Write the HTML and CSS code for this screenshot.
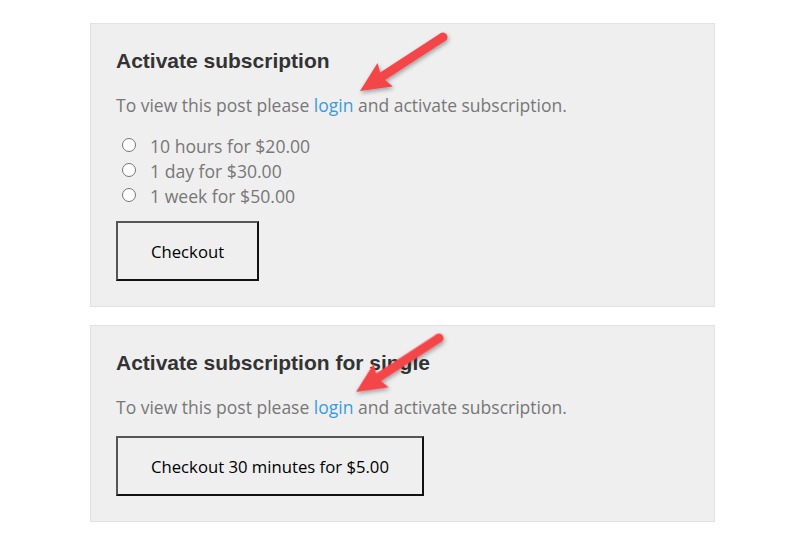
FILE: index.html
```html
<!DOCTYPE html>
<html>
<head>
<meta charset="utf-8">
<link rel="stylesheet" href="styles.css">
</head>
<body>
<div class="page">
  <section class="box">
    <h2 class="title">Activate subscription</h2>
    <p class="note">To view this post please <a class="link" href="#">login</a> and activate subscription.</p>
    <ul class="options">
      <li class="option"><span class="radio"></span><span>10 hours for $20.00</span></li>
      <li class="option"><span class="radio"></span><span>1 day for $30.00</span></li>
      <li class="option"><span class="radio"></span><span>1 week for $50.00</span></li>
    </ul>
    <button class="btn">Checkout</button>
  </section>
  <section class="box">
    <h2 class="title">Activate subscription for single</h2>
    <p class="note">To view this post please <a class="link" href="#">login</a> and activate subscription.</p>
    <button class="btn">Checkout 30 minutes for $5.00</button>
  </section>
</div>
<svg class="arrows" width="800" height="540" viewBox="0 0 800 540">
  <defs>
    <filter id="sh" x="-30%" y="-30%" width="160%" height="160%">
      <feDropShadow dx="1" dy="2" stdDeviation="2" flood-color="#000" flood-opacity="0.35"/>
    </filter>
    <g id="arrow">
      <polygon points="0,0 30,-14 27,-4.5 99,-4.5 99,4.5 27,4.5 30,14" fill="#f4444a"/>
      <circle cx="99" cy="0" r="4.5" fill="#f4444a"/>
    </g>
  </defs>
  <g filter="url(#sh)">
    <use href="#arrow" transform="translate(360,91) rotate(-33)"/>
    <use href="#arrow" transform="translate(356,392) rotate(-33)"/>
  </g>
</svg>
</body>
</html>
```
FILE: styles.css
```css
html, body {
  margin: 0;
  padding: 0;
  background: #ffffff;
}
body {
  width: 800px;
  height: 540px;
  position: relative;
  overflow: hidden;
  font-family: "Open Sans", sans-serif;
}
.page {
  padding-top: 23px;
  padding-left: 90px;
  display: flex;
  flex-direction: column;
  gap: 18px;
}
.box {
  background: #efefef;
  border: 1px solid #e2e2e2;
  padding: 24px 25px 25px 25px;
  box-sizing: border-box;
  width: 625px;
  display: flex;
  flex-direction: column;
  align-items: flex-start;
}
.title {
  margin: 0;
  font-family: "Liberation Sans", Arial, sans-serif;
  font-weight: bold;
  font-size: 21px;
  line-height: 26px;
  color: #333333;
}
.note {
  margin: 19px 0 16px 0;
  font-size: 17.5px;
  line-height: 25px;
  color: #777777;
}
.link {
  color: #3a9be2;
  text-decoration: none;
}
.options {
  list-style: none;
  margin: 0 0 12px 0;
  padding: 0;
}
.option {
  display: flex;
  align-items: center;
  font-size: 17.6px;
  line-height: 25px;
  color: #777777;
}
.radio {
  width: 14px;
  height: 14px;
  border: 1px solid #767676;
  border-radius: 50%;
  background: #ffffff;
  box-sizing: border-box;
  margin: 0 14px 0 6px;
  position: relative;
  top: -2px;
}
.btn {
  font-family: "Open Sans", sans-serif;
  font-size: 16.7px;
  color: #000000;
  background: #efefef;
  border: 2px solid;
  border-color: #555555 #111111 #111111 #555555;
  padding: 0 33px;
  height: 60px;
  margin: 0;
  cursor: pointer;
}
.arrows {
  position: absolute;
  left: 0;
  top: 0;
  pointer-events: none;
}
```
